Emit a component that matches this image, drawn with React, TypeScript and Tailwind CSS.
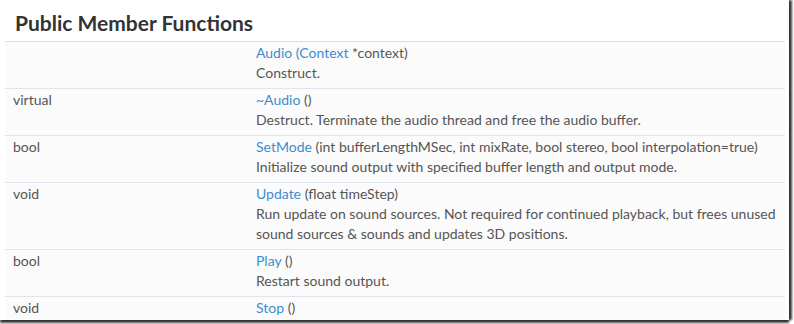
import React from "react";

type Member = {
  type: string;
  name: string;
  args: React.ReactNode;
  desc: string[];
};

const Link = ({ children }: { children: React.ReactNode }) => (
  <span className="text-[#3d8dce]">{children}</span>
);

const members: Member[] = [
  {
    type: "",
    name: "Audio",
    args: (
      <>
        <Link>(</Link>
        <Link>Context</Link> *context)
      </>
    ),
    desc: ["Construct."],
  },
  {
    type: "virtual",
    name: "~Audio",
    args: <>()</>,
    desc: ["Destruct. Terminate the audio thread and free the audio buffer."],
  },
  {
    type: "bool",
    name: "SetMode",
    args: <>(int bufferLengthMSec, int mixRate, bool stereo, bool interpolation=true)</>,
    desc: ["Initialize sound output with specified buffer length and output mode."],
  },
  {
    type: "void",
    name: "Update",
    args: <>(float timeStep)</>,
    desc: [
      "Run update on sound sources. Not required for continued playback, but frees unused",
      "sound sources & sounds and updates 3D positions.",
    ],
  },
  {
    type: "bool",
    name: "Play",
    args: <>()</>,
    desc: ["Restart sound output."],
  },
  {
    type: "void",
    name: "Stop",
    args: <>()</>,
    desc: [],
  },
];

export default function App() {
  return (
    <div className="w-[794px] h-[324px] bg-white overflow-hidden">
      <div
        className="w-[789px] h-[320px] bg-white overflow-hidden pl-[5px] shadow-[3px_0_2px_0_rgba(0,0,0,0.75),0_3px_2px_0_rgba(0,0,0,0.75)]"
        style={{ fontFamily: "Lato, 'Open Sans', sans-serif" }}
      >
        <h2 className="mt-[11px] mb-[6px] pl-[10px] text-[21px] leading-[24px] font-bold text-[#333]">
          Public Member Functions
        </h2>
        <div className="w-[780px] border-t border-[#dddddd] text-[14px] leading-[20px] text-[#555]">
          {members.map((m, i) => (
            <div
              key={i}
              className="flex bg-[#fbfbfb] border-b border-[#dfe4f0] pt-[1px] pb-[5px]"
            >
              <div className="w-[243px] shrink-0 pl-[8px]">{m.type}</div>
              <div className="flex-1 pl-[8px]">
                <div className="whitespace-nowrap">
                  <Link>{m.name}</Link>{" "}
                  {m.args}
                </div>
                {m.desc.map((d, j) => (
                  <div key={j} className="whitespace-nowrap">
                    {d}
                  </div>
                ))}
              </div>
            </div>
          ))}
        </div>
      </div>
    </div>
  );
}
